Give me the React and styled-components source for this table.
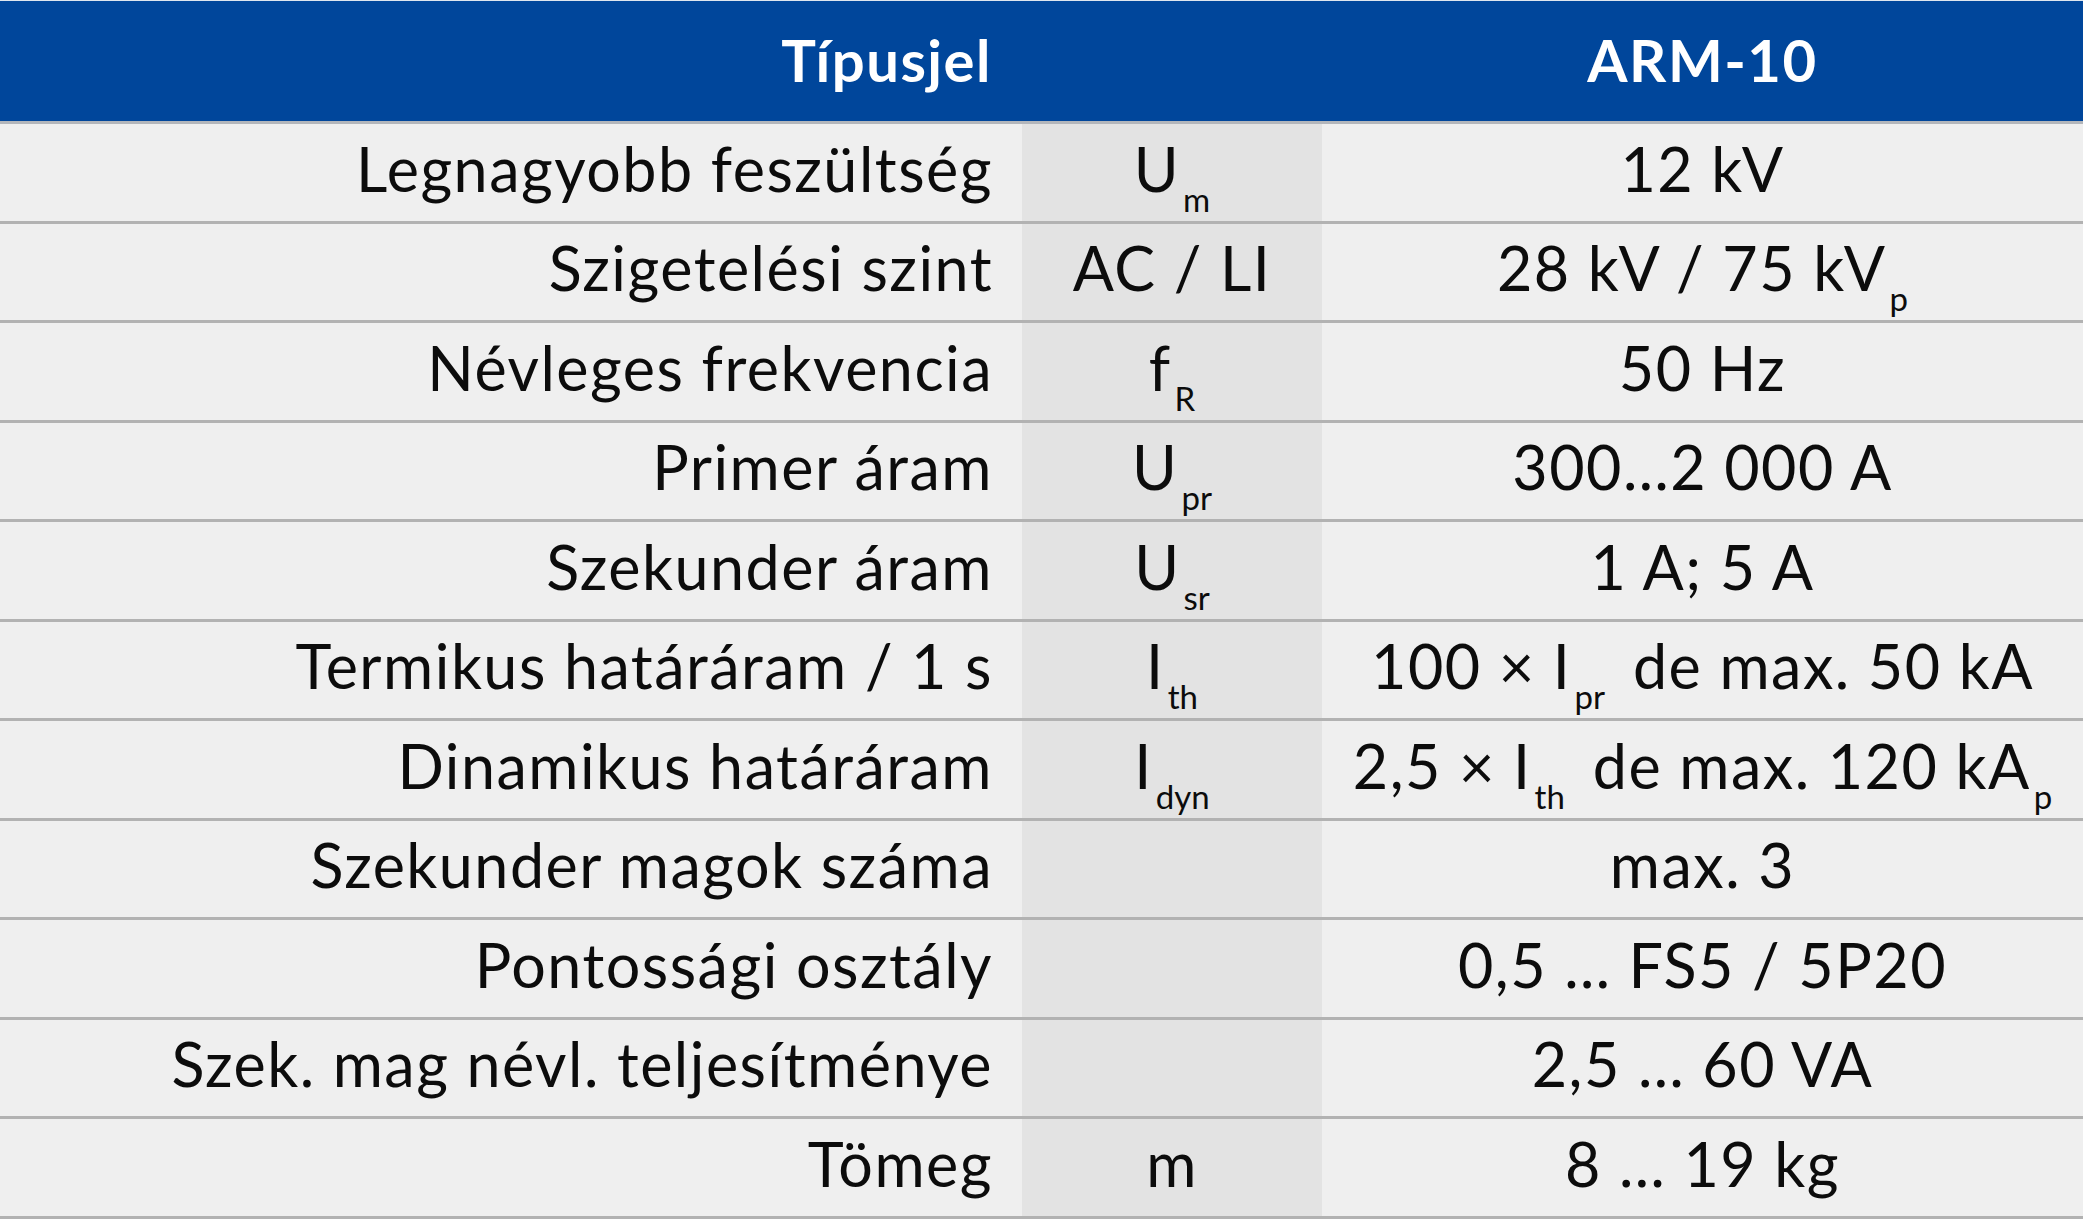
import React from "react";
import styled, { createGlobalStyle } from "styled-components";

const Global = createGlobalStyle`
  html, body { margin: 0; padding: 0; background: #ffffff; }
  body { font-family: Lato, "Open Sans", "Liberation Sans", sans-serif; }
`;

const Table = styled.div`
  width: 2083px;
  display: flex;
  flex-direction: column;
`;

const Header = styled.div`
  display: grid;
  grid-template-columns: 1022px 300px 1fr;
  height: 124px;
  box-sizing: border-box;
  border-top: 1px solid #dfe6ef;
  border-bottom: 3px solid #b3b6bb;
  background: #00469b;
  color: #ffffff;
  font-weight: 700;
  font-size: 58px;
  letter-spacing: 1.5px;
`;

const HeadCell = styled.div`
  display: flex;
  align-items: center;
  justify-content: ${(p) => (p.$align === "right" ? "flex-end" : "center")};
  padding-right: ${(p) => (p.$align === "right" ? "30px" : "0")};
  padding-bottom: 4px;
  box-sizing: border-box;
`;

const Row = styled.div`
  display: grid;
  grid-template-columns: 1022px 300px 1fr;
  height: 99.5px;
  box-sizing: border-box;
  border-bottom: 3px solid #b2b2b2;
  background: #efefef;
  color: #0c0c0c;
  font-size: 61px;
  letter-spacing: 1.5px;
`;

const Cell = styled.div`
  display: flex;
  align-items: center;
  justify-content: ${(p) => (p.$align === "right" ? "flex-end" : "center")};
  padding-right: ${(p) => (p.$align === "right" ? "29px" : "0")};
  padding-bottom: 8px;
  box-sizing: border-box;
  background: ${(p) => (p.$shade ? "#e3e3e3" : "transparent")};
`;

const Text = styled.span`
  white-space: pre;
`;

const Sub = styled.span`
  font-size: 33px;
  letter-spacing: 0;
  vertical-align: -20px;
  line-height: 0;
  margin-left: 3px;
`;

const Gap = styled.span`
  display: inline-block;
  width: ${(p) => p.$w}px;
`;

const rows = [
  ["Legnagyobb feszültség", <>U<Sub>m</Sub></>, "12 kV"],
  ["Szigetelési szint", "AC / LI", <>28 kV / 75 kV<Sub>p</Sub></>],
  ["Névleges frekvencia", <>f<Sub>R</Sub></>, "50 Hz"],
  ["Primer áram", <>U<Sub>pr</Sub></>, "300…2 000 A"],
  ["Szekunder áram", <>U<Sub>sr</Sub></>, "1 A; 5 A"],
  ["Termikus határáram / 1 s", <>I<Sub>th</Sub></>, <>100 × I<Sub>pr</Sub><Gap $w={28} />de max. 50 kA</>],
  ["Dinamikus határáram", <>I<Sub>dyn</Sub></>, <>2,5 × I<Sub>th</Sub><Gap $w={28} />de max. 120 kA<Sub>p</Sub></>],
  ["Szekunder magok száma", "", "max. 3"],
  ["Pontossági osztály", "", "0,5 … FS5 / 5P20"],
  ["Szek. mag névl. teljesítménye", "", "2,5 … 60 VA"],
  ["Tömeg", "m", "8 … 19 kg"],
];

export default function App() {
  return (
    <>
      <Global />
      <Table>
        <Header>
          <HeadCell $align="right">Típusjel</HeadCell>
          <HeadCell />
          <HeadCell>ARM-10</HeadCell>
        </Header>
        {rows.map(([label, sym, val], i) => (
          <Row key={i}>
            <Cell $align="right"><Text>{label}</Text></Cell>
            <Cell $shade><Text>{sym}</Text></Cell>
            <Cell><Text>{val}</Text></Cell>
          </Row>
        ))}
      </Table>
    </>
  );
}
